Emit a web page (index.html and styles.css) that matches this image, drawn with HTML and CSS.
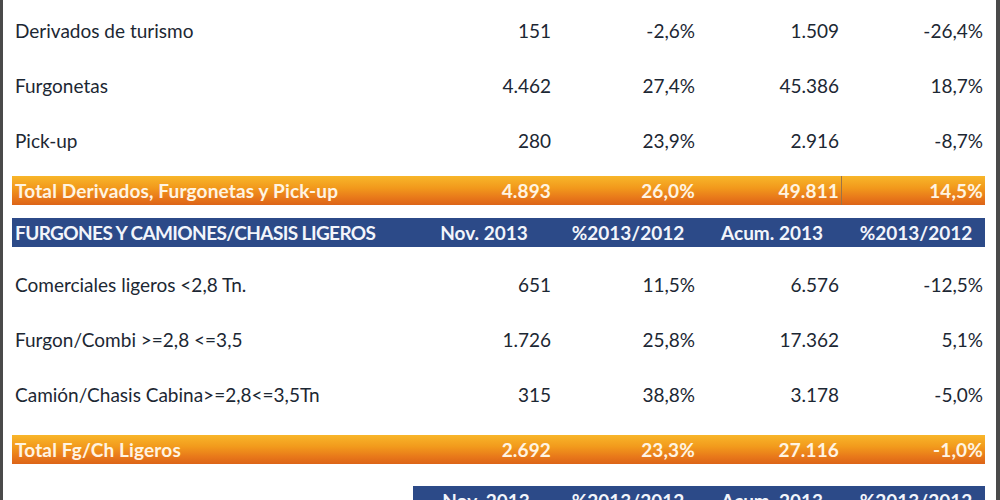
FILE: index.html
```html
<!DOCTYPE html>
<html lang="es">
<head>
<meta charset="utf-8">
<title>Matriculaciones</title>
<link rel="stylesheet" href="styles.css">
</head>
<body>
<div class="page">
  <div class="sheet">
    <div class="row data"><span class="label">Derivados de turismo</span><span class="num">151</span><span class="num">-2,6%</span><span class="num">1.509</span><span class="num">-26,4%</span></div>
    <div class="row data"><span class="label">Furgonetas</span><span class="num">4.462</span><span class="num">27,4%</span><span class="num">45.386</span><span class="num">18,7%</span></div>
    <div class="row data"><span class="label">Pick-up</span><span class="num">280</span><span class="num">23,9%</span><span class="num">2.916</span><span class="num">-8,7%</span></div>
    <div class="row total first-total"><span class="label">Total Derivados, Furgonetas y Pick-up</span><span class="num">4.893</span><span class="num">26,0%</span><span class="num cursor">49.811</span><span class="num">14,5%</span></div>
    <div class="row head"><span class="label">FURGONES Y CAMIONES/CHASIS LIGEROS</span><span class="hcell">Nov. 2013</span><span class="hcell">%2013/2012</span><span class="hcell">Acum. 2013</span><span class="hcell">%2013/2012</span></div>
    <div class="row data after-head"><span class="label">Comerciales ligeros &lt;2,8 Tn.</span><span class="num">651</span><span class="num">11,5%</span><span class="num">6.576</span><span class="num">-12,5%</span></div>
    <div class="row data"><span class="label">Furgon/Combi &gt;=2,8 &lt;=3,5</span><span class="num">1.726</span><span class="num">25,8%</span><span class="num">17.362</span><span class="num">5,1%</span></div>
    <div class="row data"><span class="label">Camión/Chasis Cabina&gt;=2,8&lt;=3,5Tn</span><span class="num">315</span><span class="num">38,8%</span><span class="num">3.178</span><span class="num">-5,0%</span></div>
    <div class="row total second-total"><span class="label">Total Fg/Ch Ligeros</span><span class="num">2.692</span><span class="num">23,3%</span><span class="num">27.116</span><span class="num">-1,0%</span></div>
    <div class="row head partial"><span class="hcell">Nov. 2013</span><span class="hcell">%2013/2012</span><span class="hcell">Acum. 2013</span><span class="hcell">%2013/2012</span></div>
  </div>
</div>
</body>
</html>
```
FILE: styles.css
```css
html, body {
  margin: 0;
  padding: 0;
  background: #4a4a4a;
}
.page {
  margin: 0 4px 0 3px;
  height: 500px;
  overflow: hidden;
  background: #ffffff;
  font-family: Lato, "Open Sans", sans-serif;
  font-size: 19px;
  color: #1c2733;
}
.sheet {
  padding: 3px 0 0 9px;
  width: 973px;
}
.row {
  display: grid;
  grid-template-columns: 397px repeat(4, 144px);
  align-items: center;
}
.label {
  padding-left: 3px;
  white-space: nowrap;
}
.num {
  text-align: right;
  padding-right: 2px;
}
.data {
  height: 55px;
}
.after-head {
  margin-top: 10px;
}
.total {
  height: 29px;
  font-weight: 700;
  letter-spacing: 0.15px;
  color: #fff4e2;
  background: linear-gradient(to bottom, #f8b62a 0%, #f29a1c 40%, #e8781a 75%, #dc6418 100%);
}
.first-total {
  margin-top: 8px;
}
.second-total {
  margin-top: 13px;
}
.head {
  height: 29px;
  font-weight: 700;
  color: #f2f5fb;
  background: #2c4a88;
  margin-top: 13px;
}
.head .label {
  letter-spacing: -0.6px;
}
.hcell {
  text-align: center;
  padding-left: 6px;
}
.partial {
  margin-top: 22px;
  margin-left: 401px;
  grid-template-columns: 140px repeat(3, 144px);
}
.cursor {
  border-right: 1px solid #9c7446;
  margin-right: -1px;
  align-self: stretch;
  display: flex;
  align-items: center;
  justify-content: flex-end;
}
```
